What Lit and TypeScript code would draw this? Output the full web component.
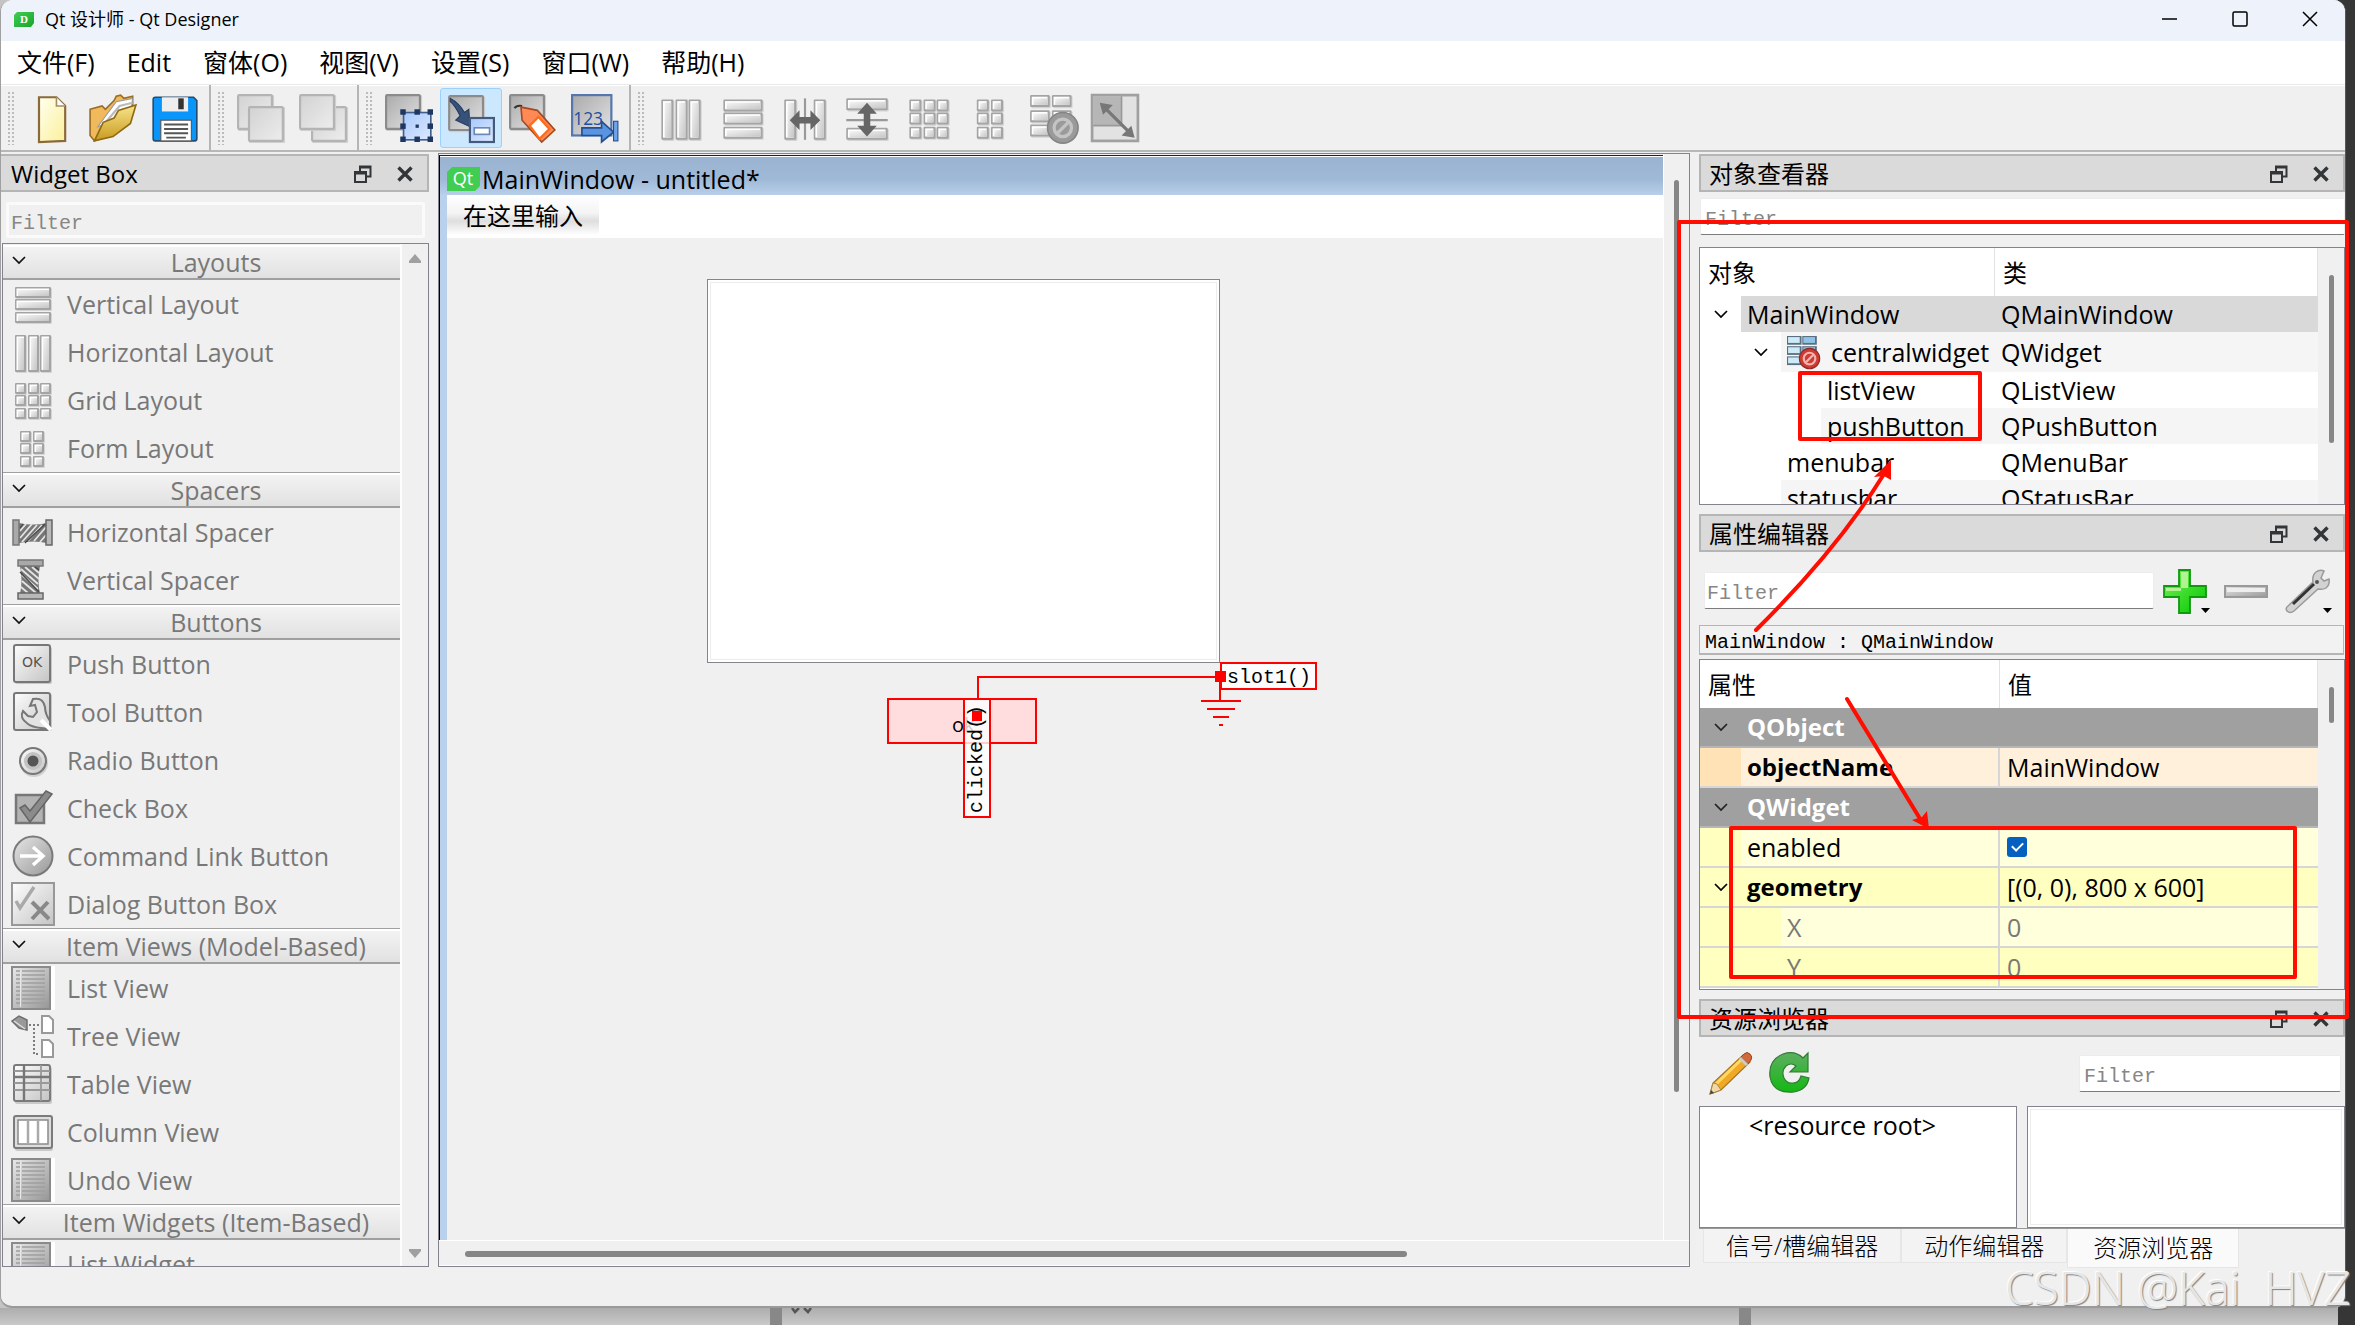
import { LitElement, html, svg, css, nothing } from "lit";
import type { SVGTemplateResult } from "lit";
import { customElement } from "lit/decorators.js";
import { classMap } from "lit/directives/class-map.js";

/* ---------- icon building blocks (44 x 44 grid) ---------- */

const cell = (x: number, y: number, w: number, h: number) => svg`
  <rect x=${x + 1} y=${y + 1} width=${w} height=${h} rx="1" fill="#d4d4d4"/>
  <rect x=${x} y=${y} width=${w} height=${h} rx="1" fill="#a4a4a4"/>
  <rect x=${x + 1.5} y=${y + 1.5} width=${w - 3.5} height=${h - 3.5} fill="#fff"/>
  <rect x=${x + 3} y=${y + 3} width=${w - 5} height=${h - 5} fill="url(#cell)"/>`;

const grid = (xs: number[], ys: number[], w: number, h: number) =>
  ys.map((y) => xs.map((x) => cell(x, y, w, h)));

const plate = (x: number, y: number, s: number, light = false) => svg`
  <rect x=${x + 1} y=${y + 1} width=${s} height=${s} rx="1" fill="#cfcfcf"/>
  <rect x=${x + 1} y=${y + 1} width=${s - 2} height=${s - 2} rx="1"
    fill=${light ? "url(#plateLight)" : "url(#plate)"} stroke=${light ? "#b4b4b4" : "#8b8b8b"} stroke-width="2"/>`;

const sheet = svg`
  <rect x="0" y="0" width="40" height="44" fill="#8a8a8a"/>
  <rect x="2" y="2" width="36" height="40" fill="url(#metal)"/>
  <rect x="40" y="0" width="4" height="44" fill="#fff"/>
  ${[5, 9, 13, 17, 21, 25, 29, 33, 37].map(
    (y) => svg`<path d="M5 ${y}h4M11 ${y}h23" stroke="#9f9f9f" stroke-width="1.6"/>`
  )}
  <path d="M9.500 3v38" stroke="#e8e8e8"/>`;

const coil = svg`
  <path d="M8 8q14 3 28 0v20q-14 -3 -28 0z" fill="#777"/>
  <path d="M9 16l6-7M9 23l12-14M11 27l15-17M17 26l14-16M23 26l12-14M29 27l6-7" stroke="#e4e4e4" stroke-width="1.800"/>
  <path d="M12 9l-3 4M14 28l20-19" stroke="#444" stroke-width="1.200"/>
  <rect x="2" y="5" width="6" height="25" fill="#a9a9a9" stroke="#777" stroke-width="1.500"/>
  <rect x="35" y="5" width="6" height="25" fill="#b9b9b9" stroke="#666" stroke-width="1.500"/>`;

const noEntry = (c: string, d: string, bar: string) => svg`
  <circle cx="31" cy="31" r="14" fill=${c} stroke=${d} stroke-width="1.500"/>
  <circle cx="31" cy="31" r="8" fill="none" stroke=${bar} stroke-width="3"/>
  <path d="M26 36l10-10" stroke=${bar} stroke-width="3"/>`;

const icons: Record<string, SVGTemplateResult> = {
  vlayout: svg`${grid([4], [5, 17, 30], 36, 11)}`,
  hlayout: svg`${grid([4, 17, 29], [5], 11, 37)}`,
  gridlayout: svg`${grid([4, 17, 29], [5, 17, 30], 11, 11)}`,
  formlayout: svg`${grid([9, 22], [5, 17, 30], 11, 11)}`,
  hsplit: svg`${grid([3, 30], [5], 11, 37)}
    <path d="M22 4v38" stroke="#999" stroke-width="2"/>
    <path d="M8 24l9-9v6h10v-6l9 9-9 9v-6H17v6z" fill="#666"/>`,
  vsplit: svg`${grid([3], [4, 31], 38, 11)}
    <path d="M3 24h38" stroke="#999" stroke-width="2"/>
    <path d="M22 8l9 10h-6v11h6l-9 10-9-10h6V18h-6z" fill="#666"/>`,
  breaklayout: svg`${grid([1, 21], [1], 18, 11)}${grid([1], [15, 28], 18, 11)}${cell(21, 15, 18, 11)}
    ${noEntry("#9a9a9a", "#858585", "#c4c4c4")}`,
  adjust: svg`<rect x="1" y="1" width="42" height="42" fill="#e2e2e2" stroke="#a0a0a0" stroke-width="2.500"/>
    <rect x="2" y="2" width="26" height="27" fill="#b6b6b6"/>
    <path d="M28 2v27H2" fill="none" stroke="#999" stroke-width="1.500"/>
    <path d="M13 13l22 22" stroke="#777" stroke-width="3"/>
    <path d="M8 8l12 2-9 9zM40 40l-12-2 9-9z" fill="#777"/>`,
  central: svg`
    ${[0, 14, 28].map((y) => svg`<rect x="0" y=${y} width="20" height="12" fill="#5b6f82"/><rect x="1.500" y=${y + 1.5} width="16" height="8" fill="#cdeaf8"/>
      <rect x="21" y=${y} width="20" height="12" fill="#5b6f82"/><rect x="22.500" y=${y + 1.5} width="16" height="8" fill="#8fc4e6"/>`)}
    ${noEntry("#cf3a32", "#8e2a25", "#f0b3ae")}`,

  file: svg`<path d="M11 3h16l8 8v32l-24 1z" fill="url(#paper)" stroke="#8b6a3a" stroke-width="2"/>
    <path d="M27 3v8h8" fill="#fff" stroke="#a58d62" stroke-width="1.500"/>`,
  folder: svg`<path d="M1 14l11-3 3 3 8-8 2-4 4-1 3 3 8-2v8L14 40 5 43 1 38z" fill="#efb95c" stroke="#9c6c22" stroke-width="1.500"/>
    <path d="M8 30L25 7l15-3-2 16z" fill="#fff" stroke="#999"/>
    <path d="M11 31L28 11l12-3" fill="none" stroke="#bbb" stroke-width="2"/>
    <path d="M5 43l8-17 10-4 4-7 16-5-5 17-16 12z" fill="url(#gold)" stroke="#8f6a14" stroke-width="1.500"/>`,
  save: svg`<path d="M4 3h35l3 3v35q0 2-2 2H4q-2 0-2-2V5q0-2 2-2z" fill="#0a95fb" stroke="#264d6b" stroke-width="1.500"/>
    <rect x="10" y="3" width="24" height="13" fill="#eee"/><rect x="25" y="4" width="5" height="10" fill="#333"/>
    <rect x="9" y="24" width="28" height="19" fill="#fff" stroke="#555"/>
    <path d="M12 28h22M12 32h22M12 36h22M14 40h18" stroke="#555" stroke-width="1.800"/>`,
  tofront: svg`${plate(0, 0, 33, true)}${plate(10, 11, 33, true)}`,
  toback: svg`${plate(11, 11, 33, true)}${plate(0, 0, 33, true)}`,
  editwidgets: svg`${plate(0, 0, 33)}
    <rect x="17" y="17" width="25" height="25" fill="url(#sky)" stroke="#3e5e8c" stroke-width="1.500"/>
    ${[[14, 14], [27, 14], [39, 14], [14, 27], [39, 27], [14, 39], [27, 39], [39, 39]].map(([x, y]) => svg`<rect x=${x} y=${y} width="5" height="5" fill="#1f3660"/>`)}
    <rect x="28" y="28" width="3" height="3" fill="#1f3660"/>`,
  editsignals: svg`${plate(1, 1, 33)}
    <path d="M3 4q8 4 13 13l4-3 1 16-13-6 4-4Q7 10 3 7z" fill="#37527a" stroke="#24395c"/>
    <rect x="21" y="22" width="22" height="22" fill="url(#sky)" stroke="#445a7c" stroke-width="2"/>
    <rect x="25" y="31" width="14" height="6" fill="#fff" stroke="#6a88b5" stroke-width="1.500"/>`,
  editbuddies: svg`${plate(0, 0, 33)}
    <path d="M5 13q2-3 7-2" fill="none" stroke="#333" stroke-width="2"/>
    <path d="M11 12l15 3 16 18-12 11-18-20z" fill="#ff8a55" stroke="#a34a22" stroke-width="1.500"/>
    <path d="M27 21l10 11-9 9-9-12z" fill="#fff" stroke="#ff6a1a" stroke-width="2"/>`,
  taborder: svg`<rect x="1" y="1" width="36" height="37" fill="url(#plate)" stroke="#5576ae" stroke-width="2"/>
    <path d="M10 31h18v-6l11 10-11 9v-6H10z" fill="#5a93e0" stroke="#234f8f" stroke-width="1.500"/>
    <text x="2" y="28" font-family="Open Sans" font-size="16" fill="#1e4f9e">123</text>
    <rect x="39" y="25" width="4" height="18" fill="#6fa4e8" stroke="#234f8f"/>`,

  hspacer: svg`<g transform="translate(0 5)">${coil}</g>`,
  vspacer: svg`<g transform="rotate(90 22 22) translate(0 7)">${coil}</g>`,
  push: svg`<rect x="4" y="5" width="37" height="37" rx="2" fill="#c6c6c6"/>
    <rect x="3" y="3" width="36" height="37" rx="2" fill="url(#button)" stroke="#777" stroke-width="2"/>
    <text x="21" y="25" text-anchor="middle" font-family="DejaVu Sans" font-size="14" fill="#555">OK</text>`,
  tool: svg`<rect x="4" y="4" width="37" height="37" rx="2" fill="#c6c6c6"/>
    <rect x="3" y="3" width="36" height="37" rx="2" fill="url(#button)" stroke="#777" stroke-width="2"/>
    <path d="M22 9q10-2 12 8 0 7 5 14v8l-9-1q-9-1-13-4-9-6-5-13l5 5 5 1 4-5-2-7-5 1z" fill="#e3e3e3" stroke="#777" stroke-width="2"/>
    <path d="M30 30l10 10" stroke="#fff" stroke-width="4"/>`,
  radio: svg`<circle cx="23" cy="25" r="14" fill="#d0d0d0"/><circle cx="22" cy="23" r="13" fill="url(#button)" stroke="#777" stroke-width="2"/>
    <circle cx="22" cy="23" r="9" fill="#c2c2c2"/><circle cx="22" cy="23" r="5.500" fill="#555"/>`,
  check: svg`<rect x="5" y="9" width="28" height="28" fill="#b3b3b3" stroke="#777" stroke-width="2.500"/>
    <path d="M9 22l5-3 5 6L35 5l6 3-22 28z" fill="#8b8b8b" stroke="#666" stroke-width="1.500"/>`,
  command: svg`<circle cx="22" cy="22" r="19.500" fill="url(#metal)" stroke="#7a7a7a" stroke-width="2"/>
    <path d="M9 22h22M22 13l10 9-10 9" fill="none" stroke="#fff" stroke-width="3.500"/>`,
  dialog: svg`<rect x="1" y="1" width="42" height="42" fill="url(#button)" stroke="#989898" stroke-width="2"/>
    <path d="M5 19l4 7L23 5" fill="none" stroke="#a9a9a9" stroke-width="3.500"/>
    <path d="M21 20l17 17M37 20L21 37" stroke="#888" stroke-width="4"/>`,
  sheet,
  tree: svg`<path d="M1 7l7-5 8 4v10l-8-2z" fill="#999" stroke="#6e6e6e" stroke-width="1.500"/><path d="M3 7l11 8" stroke="#ddd" stroke-width="1.500"/>
    <path d="M18 11h10M23 14v26h6" fill="none" stroke="#555" stroke-width="1.500" stroke-dasharray="2 2"/>
    <path d="M31 2h7l4 4v13H31zM31 26h7l4 4v13H31z" fill="#fff" stroke="#999" stroke-width="2"/>`,
  table: svg`<rect x="4" y="5" width="37" height="37" rx="2" fill="#c9c9c9"/>
    <rect x="3" y="3" width="36" height="36" rx="2" fill="url(#button)" stroke="#7b7b7b" stroke-width="2"/>
    <path d="M3 9h36M3 21h36M3 28h36M30 3v36" stroke="#999" stroke-width="1.800"/>
    <path d="M3 15h36M13 3v36" stroke="#777" stroke-width="2.400"/>`,
  column: svg`<rect x="4" y="8" width="38" height="33" rx="2" fill="#c9c9c9"/>
    <rect x="3" y="6" width="38" height="32" rx="2" fill="#ddd" stroke="#7b7b7b" stroke-width="2"/>
    <rect x="7" y="10" width="30" height="24" fill="#fff" stroke="#8a8a8a" stroke-width="1.500"/>
    <path d="M17 10v24M27 10v24" stroke="#aaa" stroke-width="2.500"/>`,

  plus: svg`<path d="M16 1h11v16h16v11H27v16H16V28H1V17h15z" fill="url(#green)" stroke="#0d9a0d" stroke-width="1.800"/>
    <path d="M18 3h7v16h-7zM3 19h15v3H3z" fill="#c9f7a9" opacity=".8"/>`,
  minus: svg`<rect x="1" y="17" width="42" height="11" fill="url(#metal)" stroke="#999" stroke-width="2"/>
    <rect x="3" y="19" width="38" height="4" fill="#eee"/>`,
  wrench: svg`<path d="M3 37L28 13q-1-7 3-10 4-3 8-1l-3 7 3 3 5-2q1 6-3 9-3 2-8 1L9 42q-4 3-7 0-2-3 1-5z" fill="#d2d2d2" stroke="#999" stroke-width="1.500"/>
    <path d="M8 35L29 15" stroke="#333" stroke-width="3"/><circle cx="32" cy="13" r="2" fill="#555"/>`,
  pencil: svg`<path d="M1 43l3-11L34 4l7 7-29 28z" fill="#f0a925" stroke="#a8741c" stroke-width="1.200"/>
    <path d="M7 33L34 7" stroke="#ffd768" stroke-width="3"/>
    <path d="M1 43l3-11 4 1 4 6z" fill="#efd9a4" stroke="#a8864c"/><path d="M1 43l1-4 3 3z" fill="#444"/>
    <path d="M32 6l7 7 3-4q2-3-1-6-3-3-6 0z" fill="#d2693a" stroke="#96481f"/><path d="M31 7l7 7" stroke="#ccc" stroke-width="3"/>`,
  reload: svg`<path d="M36 7l5-5v19H23l6-6q-5-4-10 0-5 5-2 12 3 6 9 5 6 0 8-7l8 2q-2 12-15 14Q6 43 3 26 1 9 16 3q12-4 20 4z" fill="url(#reload)" stroke="#2f7d32" stroke-width="1.200"/>`,
};

const icon = (name: string, cls = "icon") =>
  html`<svg class=${cls} viewBox="0 0 44 44" aria-hidden="true">${icons[name]}</svg>`;

const chevron = html`<svg class="chevron" viewBox="0 0 14 9" aria-hidden="true"><path d="M1 1l6 6 6-6" fill="none" stroke="currentColor" stroke-width="1.700"/></svg>`;

/* ---------- data ---------- */

const menus = ["文件(F)", "Edit", "窗体(O)", "视图(V)", "设置(S)", "窗口(W)", "帮助(H)"];

const toolGroups: [string, string][][] = [
  [["file", "New"], ["folder", "Open"], ["save", "Save"]],
  [["tofront", "Bring to front"], ["toback", "Send to back"]],
  [["editwidgets", "Edit widgets"], ["editsignals", "Edit signals/slots"], ["editbuddies", "Edit buddies"], ["taborder", "Edit tab order"]],
  [["hlayout", "Lay out horizontally"], ["vlayout", "Lay out vertically"], ["hsplit", "Horizontal splitter"], ["vsplit", "Vertical splitter"],
   ["gridlayout", "Lay out in a grid"], ["formlayout", "Lay out in a form"], ["breaklayout", "Break layout"], ["adjust", "Adjust size"]],
];

const widgetBox: { title: string; items: [string, string][] }[] = [
  { title: "Layouts", items: [["vlayout", "Vertical Layout"], ["hlayout", "Horizontal Layout"], ["gridlayout", "Grid Layout"], ["formlayout", "Form Layout"]] },
  { title: "Spacers", items: [["hspacer", "Horizontal Spacer"], ["vspacer", "Vertical Spacer"]] },
  { title: "Buttons", items: [["push", "Push Button"], ["tool", "Tool Button"], ["radio", "Radio Button"], ["check", "Check Box"], ["command", "Command Link Button"], ["dialog", "Dialog Button Box"]] },
  { title: "Item Views (Model-Based)", items: [["sheet", "List View"], ["tree", "Tree View"], ["table", "Table View"], ["column", "Column View"], ["sheet", "Undo View"]] },
  { title: "Item Widgets (Item-Based)", items: [["sheet", "List Widget"]] },
];

interface TreeRow { name: string; type: string; level: number; open?: boolean; icon?: string; selected?: boolean }
const objects: TreeRow[] = [
  { name: "MainWindow", type: "QMainWindow", level: 1, open: true, selected: true },
  { name: "centralwidget", type: "QWidget", level: 2, open: true, icon: "central" },
  { name: "listView", type: "QListView", level: 3 },
  { name: "pushButton", type: "QPushButton", level: 3 },
  { name: "menubar", type: "QMenuBar", level: 2 },
  { name: "statusbar", type: "QStatusBar", level: 2 },
];

interface PropRow { name: string; value?: string; kind: "group" | "peach" | "pale" | "deep"; level?: number; bold?: boolean; open?: boolean; check?: boolean; dim?: boolean }
const props: PropRow[] = [
  { name: "QObject", kind: "group", open: true },
  { name: "objectName", value: "MainWindow", kind: "peach", bold: true },
  { name: "QWidget", kind: "group", open: true },
  { name: "enabled", kind: "pale", check: true },
  { name: "geometry", value: "[(0, 0), 800 x 600]", kind: "deep", bold: true, open: true },
  { name: "X", value: "0", kind: "pale", level: 2, dim: true },
  { name: "Y", value: "0", kind: "deep", level: 2, dim: true },
];

@customElement("app-root")
export class AppRoot extends LitElement {
  static styles = css`
    :host {
      display: block;
      --ui: "Open Sans", "Noto Sans CJK SC", sans-serif;
      --mono: "Liberation Mono", "Noto Sans CJK SC", monospace;
      --frame: #83838f;
      font-family: var(--ui);
      font-size: 24px;
      line-height: 32px;
      color: #000;
    }
    * { box-sizing: border-box; }
    button { font: inherit; color: inherit; background: none; border: 0; padding: 0; margin: 0; text-align: left; }
    table { border-collapse: separate; border-spacing: 0; table-layout: fixed; }
    ul { list-style: none; margin: 0; padding: 0; }
    h1, h2, h3 { margin: 0; font: inherit; }
    .defs { position: absolute; width: 0; height: 0; }

    .desktop {
      position: relative; display: flex; flex-direction: column; height: 100vh; overflow: hidden;
      padding-right: 9px;
      background: linear-gradient(to right, transparent calc(100% - 17px), #363636 calc(100% - 17px)), #c4c4c4;
    }
    .window {
      flex: 1; min-height: 0; display: flex; flex-direction: column;
      background: #f0f0f0; border: 1px solid #a0a0a0; border-top: 0; border-bottom: 2px solid #9a9a9a;
      border-right-color: #585858; border-radius: 12px;
    }
    .backdrop {
      flex: none; height: 17px; margin-right: 8px;
      display: grid; grid-template-columns: 770fr 12px 957fr 12px 587fr;
      background: linear-gradient(#adadad, #c9c9c9);
    }
    .backdrop .bar { background: #888; }
    .backdrop svg { width: 28px; height: 6px; margin-left: 8px; }

    .titlebar { flex: none; display: flex; align-items: center; height: 41px; background: #eef3fb; border-radius: 12px 12px 0 0; padding-left: 13px; padding-bottom: 4px; }
    .titlebar .logo { width: 20px; height: 16px; margin-right: 11px; }
    .titlebar h1 { flex: 1; font-size: 18px; line-height: 24px; }
    .titlebar button { width: 70px; height: 36px; display: grid; place-items: center; }
    .titlebar button svg { width: 16px; height: 16px; }

    .menubar { flex: none; display: flex; align-items: flex-start; height: 43px; background: #fff; font-size: 25px; }
    .menubar button { padding: 0 16px; height: 41px; }
    .toolbars { flex: none; display: flex; height: 68px; border-top: 1px solid #e9e9e9; border-bottom: 2px solid #b5b8b8; box-shadow: inset 0 1px #fff; }
    .tools { display: flex; align-items: center; padding-right: 3px; border-right: 2px solid #b5b5b5; }
    .tools:last-child { border-right: 0; }
    .grip {
      width: 7px; height: 54px; margin: 0 6px;
      background: radial-gradient(circle, #bbb 1px, transparent 1px) 0 0 / 4px 4px;
    }
    .tools button { width: 62px; height: 60px; display: grid; place-items: center; border: 1px solid transparent; border-radius: 3px; }
    .tools button.active { background: #cce8ff; border-color: #99d1ff; }
    .tools .icon { width: 48px; height: 48px; }
    .icon { display: block; overflow: visible; }

    .workspace { flex: 1; min-height: 0; display: grid; grid-template-columns: 428px minmax(0, 1fr) 646px; gap: 9px; }

    .dock { display: flex; flex-direction: column; min-height: 0; }
    .docktitle {
      flex: none; display: flex; align-items: center; height: 38px; padding: 2px 12px 0 8px;
      background: #dadada; border: 2px solid #b5b5b5;
    }
    .docktitle h2 { flex: 1; line-height: 32px; }
    .docktitle button { display: grid; place-items: center; width: 20px; height: 30px; margin-left: 22px; }
    .docktitle svg { width: 18px; height: 18px; }
    input.filter {
      display: block; font-family: var(--mono); font-size: 20px; line-height: 24px; height: 37px; min-width: 0;
      color: #000; background: #fff; border: 1px solid #ececec; border-bottom: 1px solid #7c7c7c; border-radius: 2px; outline: 0;
      padding: 6px 4px 0;
    }
    input.filter::placeholder { color: #868686; opacity: 1; }
    .frame { border: 1px solid var(--frame); background: #fff; overflow: hidden; min-height: 0; }

    .widgets { padding-top: 2px; }
    .widgets .docktitle { border-left: 0; padding-left: 10px; }
    .widgets input.filter { margin: 10px 4px 5px 5px; height: 36px; background: #f0f0f0; border: 3px solid #fafafa; padding: 6px 2px 0; }
    .widgetlist { flex: 1; display: flex; background: #f0f0f0; margin-left: 1px; }
    .widgetlist .items { flex: 1; min-width: 0; overflow: hidden; border-right: 2px solid #fdfdfd; font-size: 25px; color: #787878; }
    .widgetlist h3 button {
      display: flex; align-items: center; width: 100%; height: 36px; padding: 1px 0 0 9px;
      border-top: 1px solid #a0a0a0; border-bottom: 2px solid #a0a0a0;
      background: linear-gradient(#fff 2px, #f3f3f3 2px, #e1e1e1);
    }
    .widgetlist h3 span { flex: 1; text-align: center; padding: 0 2px 0 8px; white-space: nowrap; }
    .widgetlist section:first-child h3 button { border-top-color: #f0f0f0; }
    .widgetlist .chevron { color: #111; margin-bottom: 4px; }
    .widgetlist li button { display: flex; align-items: center; gap: 12px; width: 100%; height: 48px; padding: 0 0 1px 8px; white-space: nowrap; }
    .widgetlist li .icon { width: 44px; height: 44px; }
    .chevron { width: 14px; height: 9px; flex: none; }
    .updown { width: 26px; display: flex; flex-direction: column; justify-content: space-between; align-items: center; padding: 10px 0 8px; }
    .updown svg { width: 12px; height: 10px; }

    .mdi {
      display: grid; grid-template-columns: minmax(0, 1fr) 26px; grid-template-rows: minmax(0, 1fr) 26px;
      margin: 1px 0 0; border: 1px solid var(--frame);
    }
    .form { display: flex; flex-direction: column; border-left: 1px solid #000; border-top: 1px solid #222; margin-top: 1px; min-width: 0; }
    .formtitle { flex: none; display: flex; align-items: center; gap: 2px; height: 39px; padding: 6px 0 0 7px; font-size: 25px; background: linear-gradient(#fff 1px, #9ab3d1 1px, #a0b9d7 60%, #b7cfe9); }
    .formtitle svg { width: 33px; height: 24px; }
    .formbody { flex: 1; min-height: 0; display: flex; flex-direction: column; border-left: 7px solid #b9d1ea; }
    .formmenu { flex: none; background: #fff; height: 43px; }
    .formmenu button { height: 40px; padding: 2px 16px 0; background: linear-gradient(#fff, #f4f4f4 45%, #dedede 65%, #fff); }
    .canvas { position: relative; flex: 1; min-height: 0; overflow: hidden; }
    .listview { position: absolute; left: 260px; top: 41px; width: 513px; height: 384px; background: #fff; border: 1px solid #83878b; box-shadow: inset 0 0 0 2px #fff, inset 0 0 0 3px #ececec; }
    .pushbutton { position: absolute; left: 440px; top: 460px; width: 150px; height: 46px; border: 2px solid #f00; background: #ffdcde; font-size: 20px; padding: 8px 0 0 63px; }
    .wires { position: absolute; left: 440px; top: 424px; width: 400px; height: 80px; overflow: visible; }
    .signal { position: absolute; font-family: var(--mono); font-size: 20px; line-height: 24px; background: #fffc; border: 2px solid #f00; }
    .slot { left: 773px; top: 424px; width: 97px; height: 28px; padding: 2px 0 0 5px; }
    .clicked { left: 516px; top: 460px; width: 28px; height: 120px; writing-mode: vertical-rl; transform: rotate(180deg); padding: 3px 0 0; }
    .vtrack { border-left: 1px solid #fff; display: flex; flex-direction: column; align-items: center; padding: 26px 0 0; }
    .vtrack i { width: 5px; flex: 0 0 86%; border-radius: 3px; background: #868686; }
    .htrack { grid-column: 1 / 3; border-top: 1px solid #fff; border-bottom: 1px solid #fff; padding: 10px 0 0 26px; }
    .htrack i { display: block; width: 77%; height: 6px; border-radius: 3px; background: #868686; }

    .right { position: relative; display: flex; flex-direction: column; gap: 9px; padding-top: 2px; min-height: 0; }
    .inspector { flex: 351 1 0; }
    .inspector input.filter { margin: 6px 0 12px 1px; }
    .inspector .frame { flex: 1; display: flex; }
    .frame .scroll { flex: 1; min-width: 0; overflow: hidden; }
    .frame .bar { width: 26px; background: #f0f0f0; display: flex; justify-content: center; }
    .frame .bar i { width: 5px; border-radius: 3px; background: #868686; }
    .inspector .bar i { height: 168px; margin-top: 27px; }
    .editor .bar i { height: 36px; margin-top: 27px; }
    .scroll table { width: 100%; }
    th { font-weight: 400; text-align: left; height: 48px; padding: 2px 8px 0; border-right: 1px solid #e2e2e2; line-height: 32px; }
    td { padding: 0; white-space: nowrap; overflow: hidden; font-size: 25px; line-height: 32px; }
    .objects col:first-child { width: 295px; }
    .objects td { height: 36px; }
    .objects tr.tall td { height: 40px; }
    .node { display: flex; height: 100%; }
    .objects .node { height: 36px; }
    .objects .tall .node { height: 40px; }
    .indent { flex: none; width: 40px; display: grid; place-items: center; }
    .indent:first-child { width: 41px; }
    .name { flex: 1; display: flex; align-items: center; gap: 12px; padding: 0 0 1px 6px; }
    .name .icon { width: 32px; height: 32px; }
    .objects td + td { padding: 0 0 1px 6px; }
    .alt .name, .alt td + td { background: #f5f5f5; }
    .sel .name, .sel td + td { background: #d9d9d9; }

    .editor { flex: 475 1 0; }
    .editbar { flex: none; display: flex; align-items: center; padding: 14px 16px 10px 5px; height: 73px; }
    .editbar input.filter { flex: 1; padding-left: 2px; }
    .editbar button { position: relative; width: 44px; height: 48px; margin-left: 9px; display: flex; align-items: center; }
    .editbar button + button { margin-left: 17px; }
    .editbar .icon { width: 44px; height: 44px; }
    .editbar .drop { position: absolute; right: -3px; bottom: 2px; width: 9px; height: 5px; }
    .classname { flex: none; height: 30px; margin: 0 1px 4px 0; padding: 5px 5px 0; border: 1px solid #b5b5b5; border-bottom-width: 2px; background: #f2f2f2; font-family: var(--mono); font-size: 20px; line-height: 24px; white-space: pre; }
    .editor .frame { flex: 1; display: flex; }
    .props col:first-child { width: 300px; }
    .props th { height: 48px; }
    .props td { height: 40px; border-bottom: 2px solid #d6d6d6; }
    .props td + td { padding: 0 0 1px 7px; }
    .props td:first-child:not([colspan]) { border-right: 2px solid #d6d6d6; }
    .props .node { height: 38px; }
    .props .group td { background: #a0a0a0; color: #fff; font-weight: 700; font-size: 24px; border-bottom-color: #b6b6b6; }
    .group .chevron { color: #222; }
    .bold .name { font-weight: 700; font-size: 24px; }
    .peach td { background: #fff0dc; }
    .peach .indent { background: #ffe2b6; }
    .pale td { background: #ffffdc; }
    .pale .indent, .deep td { background: #ffffbf; }
    .dim .name, .dim td + td { color: #787878; }
    .props input {
      appearance: none; display: grid; place-items: center;
      width: 20px; height: 20px; margin: 0; border-radius: 3px; background: #0560c0;
    }
    .props input::before { content: ""; width: 9px; height: 5px; border: solid #fff; border-width: 0 0 2px 2px; transform: rotate(-45deg); margin-bottom: 3px; }

    .resources { flex: 268 1 0; }
    .resbar { flex: none; display: flex; align-items: center; height: 69px; padding: 4px 4px 0 10px; gap: 14px; }
    .resbar .icon { width: 44px; height: 44px; }
    .resbar input.filter { width: 262px; margin-left: auto; }
    .reslists { flex: 1; min-height: 0; display: grid; grid-template-columns: 1fr 1fr; gap: 10px; }
    .reslists .frame { font-size: 25px; padding: 2px 0 0 49px; }
    .reslists .frame + .frame { box-shadow: inset 0 0 0 2px #fff, inset 0 0 0 3px #ececec; }
    .tabs { flex: none; display: flex; align-items: flex-start; height: 39px; padding-left: 4px; border-top: 1px solid #999; font-weight: 300; }
    .tabs button { height: 34px; padding: 0 22px; background: #f3f3f3; border: 1px solid #e6e6e6; border-top: 0; white-space: nowrap; line-height: 32px; }
    .tabs button.current { height: 39px; padding: 0 25px; background: #fafafa; }

    .marks { position: absolute; left: 0; top: 0; width: 646px; height: 1114px; overflow: visible; pointer-events: none; }
    .status { flex: none; height: 39px; }
    .watermark {
      position: absolute; right: 4px; bottom: 15px; font-size: 46px; line-height: 46px; font-weight: 300; font-family: "Noto Sans", "Open Sans", sans-serif;
      white-space: pre; color: #e6e6e6; text-shadow: 1px 1px 1px #808080, -1px -1px 1px #fff; pointer-events: none;
    }
  `;

  private dockTitle(title: string) {
    return html`<header class="docktitle">
      <h2>${title}</h2>
      <button aria-label="Float ${title}"><svg viewBox="0 0 18 18"><path d="M6 6V1.500h10.500v10H12M5 2.500h12" fill="none" stroke="#333638" stroke-width="2"/><path d="M1 7h11v10H1zM1 8.500h11" fill="#dadada" stroke="#333638" stroke-width="2"/></svg></button>
      <button aria-label="Close ${title}"><svg viewBox="0 0 18 18"><path d="M2.500 2.500l13 13M15.500 2.500l-13 13" stroke="#333638" stroke-width="3.400"/></svg></button>
    </header>`;
  }

  private indents(level: number, open?: boolean) {
    return Array.from({ length: level }, (_, i) => html`<span class="indent">${open && i === level - 1 ? chevron : nothing}</span>`);
  }

  private defs() {
    const g = (id: string, a: string, b: string, diag = true) =>
      svg`<linearGradient id=${id} x1="0" y1="0" x2=${diag ? 1 : 0} y2="1"><stop offset="0" stop-color=${a}/><stop offset="1" stop-color=${b}/></linearGradient>`;
    return html`<svg class="defs" aria-hidden="true"><defs>
      ${g("cell", "#f4f4f4", "#c6c6c6")}${g("plate", "#aaaaaa", "#e4e4e4")}${g("plateLight", "#d2d2d2", "#ededed")}
      ${g("metal", "#e6e6e6", "#989898")}${g("paper", "#fffff0", "#fbf09a")}${g("gold", "#f7e58c", "#c99a1e", false)}
      ${g("sky", "#a9c8fb", "#dbe9ff")}${g("button", "#fdfdfd", "#c4c4c4")}${g("green", "#7df05a", "#00c800")}
      ${g("reload", "#5fae62", "#12b812", false)}${g("qt", "#41cd52", "#19a52c")}
    </defs></svg>`;
  }

  private widgetDock() {
    return html`<aside class="dock widgets">
      ${this.dockTitle("Widget Box")}
      <input class="filter" placeholder="Filter" aria-label="Filter widgets">
      <div class="frame widgetlist">
        <div class="items">
          ${widgetBox.map((s) => html`<section>
            <h3><button aria-expanded="true">${chevron}<span>${s.title}</span></button></h3>
            <ul>${s.items.map(([i, label]) => html`<li><button>${icon(i)}${label}</button></li>`)}</ul>
          </section>`)}
        </div>
        <div class="updown">
          <svg viewBox="0 0 12 10"><path d="M6 0l6 7v2H0V7z" fill="#a0a0a0"/></svg>
          <svg viewBox="0 0 12 10"><path d="M6 10L0 3V1h12v2z" fill="#a0a0a0"/></svg>
        </div>
      </div>
    </aside>`;
  }

  private formEditor() {
    return html`<main class="mdi">
      <div class="form">
        <div class="formtitle">
          <svg viewBox="0 0 33 24"><path d="M5 0h28v19l-5 5H0V5z" fill="#41cd52"/><text x="16" y="18" text-anchor="middle" font-family="Open Sans" font-size="18" fill="#fff">Qt</text></svg>
          MainWindow - untitled*
        </div>
        <div class="formbody">
          <div class="formmenu"><button>在这里输入</button></div>
          <div class="canvas">
            <div class="listview"></div>
            <button class="pushbutton">ok</button>
            <svg class="wires" aria-hidden="true">
              <path d="M91 36V15H334M333 15V38" fill="none" stroke="#f00" stroke-width="2"/>
              <path d="M314 39h40M320 47h28M326 55h16M332 63h4" stroke="#f00" stroke-width="2"/>
            </svg>
            <span class="signal slot">slot1()</span>
            <span class="signal clicked">clicked()</span>
            <svg class="wires" aria-hidden="true"><path d="M328 9h11v11h-11zM85 49h10v10H85z" fill="#f00"/></svg>
          </div>
        </div>
      </div>
      <div class="vtrack"><i></i></div>
      <div class="htrack"><i></i></div>
    </main>`;
  }

  private inspector() {
    return html`<section class="dock inspector">
      ${this.dockTitle("对象查看器")}
      <input class="filter" placeholder="Filter" aria-label="Filter objects">
      <div class="frame">
        <div class="scroll"><table class="objects">
          <colgroup><col><col></colgroup>
          <thead><tr><th>对象</th><th>类</th></tr></thead>
          <tbody>${objects.map((o, i) => html`<tr class=${classMap({ alt: i % 2 === 1, sel: !!o.selected, tall: !!o.icon })}>
            <td><div class="node">${this.indents(o.level, o.open)}<span class="name">${o.icon ? icon(o.icon) : nothing}${o.name}</span></div></td>
            <td>${o.type}</td></tr>`)}</tbody>
        </table></div>
        <div class="bar"><i></i></div>
      </div>
    </section>`;
  }

  private propertyEditor() {
    const drop = html`<svg class="drop" viewBox="0 0 9 5"><path d="M0 0h9L4.500 5z"/></svg>`;
    return html`<section class="dock editor">
      ${this.dockTitle("属性编辑器")}
      <div class="editbar">
        <input class="filter" placeholder="Filter" aria-label="Filter properties">
        <button aria-label="Add property">${icon("plus")}${drop}</button>
        <button aria-label="Remove property">${icon("minus")}</button>
        <button aria-label="Configure">${icon("wrench")}${drop}</button>
      </div>
      <div class="classname">MainWindow : QMainWindow</div>
      <div class="frame">
        <div class="scroll"><table class="props">
          <colgroup><col><col></colgroup>
          <thead><tr><th>属性</th><th>值</th></tr></thead>
          <tbody>${props.map((p) => html`<tr class=${classMap({ [p.kind]: true, bold: !!p.bold, dim: !!p.dim })}>
            <td colspan=${p.kind === "group" ? 2 : nothing}><div class="node">${this.indents(p.level ?? 1, p.open)}
              ${p.check ? html`<label class="name" for="prop-enabled">${p.name}</label>` : html`<span class="name">${p.name}</span>`}</div></td>
            ${p.kind === "group" ? nothing : html`<td>${p.check ? html`<input id="prop-enabled" type="checkbox" checked>` : p.value}</td>`}
          </tr>`)}</tbody>
        </table></div>
        <div class="bar"><i></i></div>
      </div>
    </section>`;
  }

  private resourceBrowser() {
    return html`<section class="dock resources">
      ${this.dockTitle("资源浏览器")}
      <div class="resbar">
        <button aria-label="Edit resources">${icon("pencil")}</button>
        <button aria-label="Reload">${icon("reload")}</button>
        <input class="filter" placeholder="Filter" aria-label="Filter resources">
      </div>
      <div class="reslists"><div class="frame">&lt;resource root&gt;</div><div class="frame"></div></div>
      <div class="tabs" role="tablist">
        <button role="tab">信号/槽编辑器</button><button role="tab">动作编辑器</button><button role="tab" class="current" aria-selected="true">资源浏览器</button>
      </div>
    </section>`;
  }

  render() {
    return html`${this.defs()}
    <div class="desktop">
      <div class="window">
        <header class="titlebar">
          <svg class="logo" viewBox="0 0 20 16"><path d="M3 1h17v11l-3 4H0V4z" fill="url(#qt)"/><text x="10" y="12" text-anchor="middle" font-family="Liberation Serif" font-weight="700" font-size="11" fill="#fff">D</text></svg>
          <h1>Qt 设计师 - Qt Designer</h1>
          <button aria-label="Minimize"><svg viewBox="0 0 16 16"><path d="M0 8h15" stroke="#000" stroke-width="1.500"/></svg></button>
          <button aria-label="Maximize"><svg viewBox="0 0 16 16"><rect x="1" y="1" width="14" height="14" rx="1.500" fill="none" stroke="#000" stroke-width="1.500"/></svg></button>
          <button aria-label="Close"><svg viewBox="0 0 16 16"><path d="M1 1l14 14M15 1L1 15" stroke="#000" stroke-width="1.500"/></svg></button>
        </header>
        <nav class="menubar">${menus.map((m) => html`<button>${m}</button>`)}</nav>
        <div class="toolbars">
          ${toolGroups.map((g) => html`<div class="tools" role="toolbar"><span class="grip"></span>
            ${g.map(([i, label]) => html`<button aria-label=${label} class=${classMap({ active: i === "editsignals" })}>${icon(i)}</button>`)}</div>`)}
        </div>
        <div class="workspace">
          ${this.widgetDock()}
          ${this.formEditor()}
          <div class="right">
            ${this.inspector()}
            ${this.propertyEditor()}
            ${this.resourceBrowser()}
            <svg class="marks" viewBox="1699 152 646 1114" aria-hidden="true">
              <g fill="none" stroke="#ff0d00" stroke-width="4" stroke-linejoin="round" stroke-linecap="round">
                <rect x="1679" y="222" width="668" height="795"/>
                <rect x="1800" y="373" width="180" height="66"/>
                <rect x="1731" y="828" width="564" height="149"/>
                <path d="M1756 630Q1837 550 1884 474"/>
                <path d="M1847 699L1922 822"/>
              </g>
              <path d="M1891 460l0 20-7-4-10 1z" fill="#ff0d00"/>
              <path d="M1929 829l-2-18-5 6-10 3z" fill="#ff0d00"/>
            </svg>
          </div>
        </div>
        <footer class="status"></footer>
      </div>
      <div class="backdrop"><span></span><span class="bar"></span>
        <svg viewBox="0 0 28 6"><path d="M2 0l3 4 4-4M14 0l4 4 3-4" fill="none" stroke="#555" stroke-width="2.500"/></svg>
        <span class="bar"></span><span></span></div>
      <div class="watermark">CSDN @Kai  HVZ</div>
    </div>`;
  }
}
